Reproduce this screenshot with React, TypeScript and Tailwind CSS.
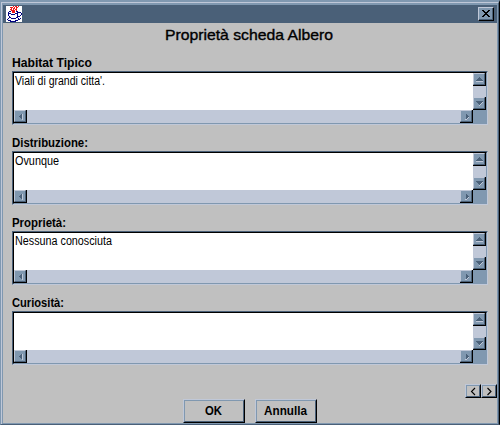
import React from "react";

const sections = [
  { label: "Habitat Tipico", text: "Viali di grandi citta'.", lw: 80, tw: 90 },
  { label: "Distribuzione:", text: "Ovunque", lw: 76, tw: 44 },
  { label: "Proprietà:", text: "Nessuna conosciuta", lw: 54, tw: 97 },
  { label: "Curiosità:", text: "", lw: 52, tw: 0 },
];

type LabelProps = { text: string; width: number; size: number; bold?: boolean; h: number; thicken?: number };

function Label({ text, width, size, bold, h, thicken = 0 }: LabelProps) {
  return (
    <svg width={width + 2} height={h} className="block shrink-0 overflow-visible">
      <text
        x="0"
        y={h - 4}
        textLength={width}
        lengthAdjust="spacingAndGlyphs"
        fontSize={size}
        fontWeight={bold ? 700 : 400}
        fontFamily="'Liberation Sans', Arial, sans-serif"
        stroke="black"
        strokeWidth={thicken}
      >
        {text}
      </text>
    </svg>
  );
}

const arrows = {
  left: { dark: "M6 3h1v5h-1v-1h-1v-1h-1v-1h1v-1h1z", light: "M7 3h1v6h-1z" },
  right: { dark: "M4 2h1v1h1v1h1v1h1v1h-1v1h-1v1h-1v-6z", light: "M7 6h1v1h-1v1h-1v1h-2v-1h2v-1h1z" },
  up: { dark: "M5 3h1v1h1v1h1v1h1v1h-7v-1h1v-1h1v-1h1z", light: "M2 7h7v1h-7z" },
  down: { dark: "M2 3h7v1h-1v1h-1v1h-1v1h-1v-1h-1v-1h-1v-1h-1z", light: "M8 4h1v1h-1v1h-1v1h-1v1h-1v-1h1v-1h1v-1h1z" },
};

function ScrollButton({ dir }: { dir: keyof typeof arrows }) {
  return (
    <div className="h-[13px] w-[13px] shrink-0 border-r border-b border-black bg-[#8098b0]">
      <div className="h-3 w-3 border border-t-[#c0c8d8] border-r-[#4a6078] border-b-[#4a6078] border-l-[#c0c8d8]">
        <svg width="10" height="10" className="block" shapeRendering="crispEdges">
          <path d={arrows[dir].light} fill="#c0c8d8" />
          <path d={arrows[dir].dark} fill="#4a6078" />
        </svg>
      </div>
    </div>
  );
}

function TextBox({ text, tw }: { text: string; tw: number }) {
  return (
    <div className="h-[54px] w-[476px] border border-t-[#4a6078] border-r-[#c0c8d8] border-b-[#c0c8d8] border-l-[#4a6078]">
      <div className="h-[52px] w-[474px] border border-t-black border-r-[#8098b0] border-b-[#8098b0] border-l-black">
        <div className="flex h-[37px] bg-white">
          <div className="flex-1 pl-px">
            {text && <Label text={text} width={tw} size={12} h={16} />}
          </div>
          <div className="flex flex-col justify-between bg-[#c0c8d8]">
            <ScrollButton dir="up" />
            <ScrollButton dir="down" />
          </div>
        </div>
        <div className="flex h-[13px] bg-[#8098b0]">
          <div className="flex w-[459px] justify-between bg-[#c0c8d8]">
            <ScrollButton dir="left" />
            <ScrollButton dir="right" />
          </div>
        </div>
      </div>
    </div>
  );
}

function PushButton({ text, tw }: { text: string; tw: number }) {
  return (
    <button className="h-6 w-[62px] border border-t-[#c0c8d8] border-r-black border-b-black border-l-[#c0c8d8]">
      <span className="flex h-[22px] w-[60px] justify-center border border-t-[#8098b0] border-r-[#4a6078] border-b-[#4a6078] border-l-[#8098b0]">
        <Label text={text} width={tw} size={12.5} bold h={18} />
      </span>
    </button>
  );
}

function StepButton({ next }: { next?: boolean }) {
  return (
    <button className="h-[14px] w-4 border border-t-[#c0c8d8] border-r-black border-b-black border-l-[#c0c8d8]">
      <span className="block h-3 w-[14px] border border-t-[#8098b0] border-r-[#4a6078] border-b-[#4a6078] border-l-[#8098b0]">
        <svg width="12" height="10" className="block">
          <path d={next ? "M4.5 2 8 5.5 4.5 9" : "M8 2 4.5 5.5 8 9"} fill="none" stroke="black" strokeWidth="1.1" />
        </svg>
      </span>
    </button>
  );
}

const cup = [
  ".......r.rr.r...",
  "....rrr.r.rr....",
  ".....r.rr.r.....",
  "....rr.r.rr.....",
  ".....rrrr.r.....",
  "...bb.rrr.bb....",
  "..b...rrr..bbbb.",
  "..bbb....bbb...b",
  "..b..bbbb..b...b",
  "..b........b..b.",
  "...b.......bbb..",
  "...bb.....bb....",
  "..b..bbbbb..b.b.",
  ".b..........bb..",
  "..bbb....bbb....",
  "....bbbbbb......",
];

function JavaIcon() {
  return (
    <svg width="16" height="16" shapeRendering="crispEdges" className="bg-white">
      {cup.flatMap((row, y) =>
        [...row].map((c, x) =>
          c === "." ? null : <rect key={x + "-" + y} x={x} y={y} width="1" height="1" fill={c === "r" ? "#f01818" : "#000080"} />
        )
      )}
    </svg>
  );
}

export default function App() {
  return (
    <div className="h-[425px] w-[500px] overflow-hidden border-t-2 border-r border-b border-l border-t-[#8098b0] border-r-black border-b-[#4a6078] border-l-[#8098b0] bg-[#c0c0c0]">
      <div className="h-[422px] w-[498px] border-t border-r border-l border-t-[#c0c8d8] border-r-[#4a6078] border-l-[#c0c8d8]">
        <div className="h-[421px] w-[496px] border-t-2 border-r border-b border-l border-[#8098b0]">
          <header className="flex h-[18px] items-center justify-between bg-[#4a6078] pr-[3px] pl-[3px]">
            <JavaIcon />
            <button className="h-[14px] w-4 border border-t-[#c0c8d8] border-r-black border-b-black border-l-[#c0c8d8] bg-[#8098b0]">
              <span className="block h-3 w-[14px] border-r border-b border-[#4a6078]">
                <svg width="13" height="11" className="block" shapeRendering="crispEdges">
                  <path
                    d="M3 2h2v1h1v1h2v-1h1v-1h2v1h-1v1h-1v1h-1v1h1v1h1v1h1v1h-2v-1h-1v-1h-2v1h-1v1h-2v-1h1v-1h1v-1h1v-1h-1v-1h-1v-1h-1z"
                    fill="black"
                  />
                </svg>
              </span>
            </button>
          </header>
          <h1 className="flex h-8 pt-[2px] pl-[162px]">
            <Label text="Proprietà scheda Albero" width={168} size={14.5} h={19} thicken={0.35} />
          </h1>
          <main className="pl-[9px]">
            {sections.map((s) => (
              <section key={s.label} className="h-20">
                <div className="h-4">
                  <Label text={s.label} width={s.lw} size={12.5} bold h={16} />
                </div>
                <TextBox text={s.text} tw={s.tw} />
              </section>
            ))}
          </main>
          <div className="flex h-6 items-start justify-end pt-[9px]">
            <StepButton />
            <StepButton next />
          </div>
          <footer className="flex gap-[10px] pl-[180px]">
            <PushButton text="OK" tw={17} />
            <PushButton text="Annulla" tw={43} />
          </footer>
        </div>
      </div>
    </div>
  );
}
